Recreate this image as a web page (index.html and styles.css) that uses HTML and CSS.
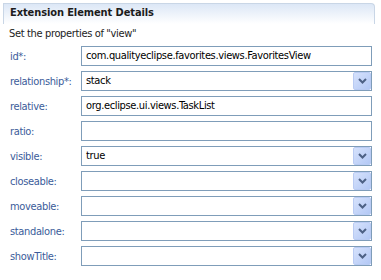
FILE: index.html
```html
<!DOCTYPE html>
<html lang="en">
<head>
    <meta charset="UTF-8" />
    <title>Extension Element Details</title>
    <link rel="stylesheet" href="styles.css">
</head>
<body>
    <div class="section">
        <div class="section-head">Extension Element Details</div>
        <p class="desc">Set the properties of "view"</p>

        <div class="fields">
            <label>id*:</label>
            <div class="field">com.qualityeclipse.favorites.views.FavoritesView</div>

            <label>relationship*:</label>
            <div class="field combo">stack<span class="drop"><svg width="9" height="6" viewBox="0 0 9 6"><path d="M1 1 L4.5 4.5 L8 1" fill="none" stroke="#4d6185" stroke-width="2"/></svg></span></div>

            <label>relative:</label>
            <div class="field">org.eclipse.ui.views.TaskList</div>

            <label>ratio:</label>
            <div class="field"></div>

            <label>visible:</label>
            <div class="field combo">true<span class="drop"><svg width="9" height="6" viewBox="0 0 9 6"><path d="M1 1 L4.5 4.5 L8 1" fill="none" stroke="#4d6185" stroke-width="2"/></svg></span></div>

            <label>closeable:</label>
            <div class="field combo"><span class="drop"><svg width="9" height="6" viewBox="0 0 9 6"><path d="M1 1 L4.5 4.5 L8 1" fill="none" stroke="#4d6185" stroke-width="2"/></svg></span></div>

            <label>moveable:</label>
            <div class="field combo"><span class="drop"><svg width="9" height="6" viewBox="0 0 9 6"><path d="M1 1 L4.5 4.5 L8 1" fill="none" stroke="#4d6185" stroke-width="2"/></svg></span></div>

            <label>standalone:</label>
            <div class="field combo"><span class="drop"><svg width="9" height="6" viewBox="0 0 9 6"><path d="M1 1 L4.5 4.5 L8 1" fill="none" stroke="#4d6185" stroke-width="2"/></svg></span></div>

            <label>showTitle:</label>
            <div class="field combo"><span class="drop"><svg width="9" height="6" viewBox="0 0 9 6"><path d="M1 1 L4.5 4.5 L8 1" fill="none" stroke="#4d6185" stroke-width="2"/></svg></span></div>
        </div>
    </div>
</body>
</html>
```

FILE: styles.css
```css
* {
    box-sizing: border-box;
    margin: 0;
    padding: 0;
}

body {
    background: #fff;
    font-family: 'DejaVu Sans Condensed', 'Liberation Sans', Arial, sans-serif;
    font-size: 11px;
    letter-spacing: -0.35px;
    color: #000;
}

.section {
    margin: 3px 6px 0 3px;
}

.section-head {
    height: 21px;
    padding: 2px 0 0 6px;
    border: 1px solid #c9d6e6;
    border-bottom: none;
    border-radius: 0 4px 0 0;
    background: linear-gradient(#dce7f6, #fff);
    font-weight: bold;
    letter-spacing: -0.1px;
    color: #1c1c1c;
}

.desc {
    padding: 3px 0 0 6px;
    height: 20px;
    color: #1c1c1c;
}

.fields {
    display: grid;
    grid-template-columns: 71px 1fr;
    row-gap: 5px;
    padding: 2px 3px 0 7px;
    align-items: center;
}

.fields label {
    color: #3b5c9a;
}

.field {
    position: relative;
    height: 20px;
    padding: 2px 0 0 4px;
    border: 1px solid #7f9db9;
    background: #fff;
    white-space: nowrap;
    overflow: hidden;
}

.drop {
    position: absolute;
    top: 0;
    right: 0;
    width: 18px;
    height: 18px;
    border: 1px solid #b9cbf3;
    border-radius: 2px;
    background: linear-gradient(135deg, #d6e2fc, #b3c8f5);
    display: flex;
    align-items: center;
    justify-content: center;
}
```
